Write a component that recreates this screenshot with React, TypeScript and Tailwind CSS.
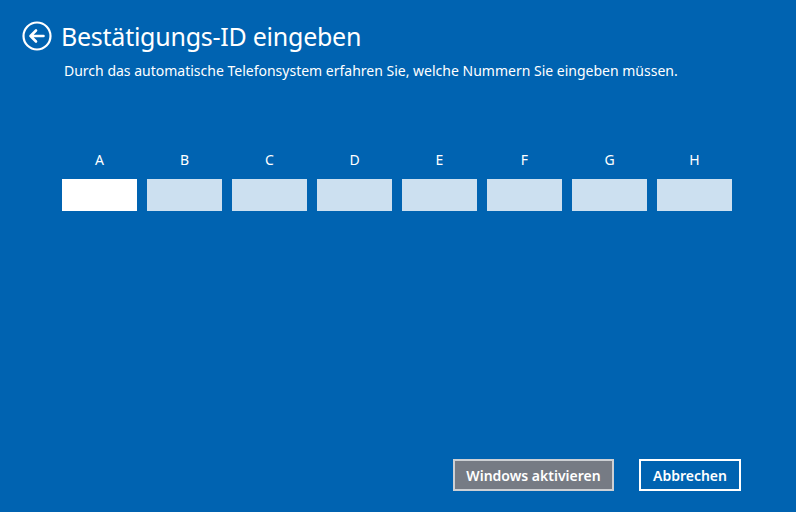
import React from "react";

const letters = ["A", "B", "C", "D", "E", "F", "G", "H"];

export default function App() {
  return (
    <div
      className="w-full h-[512px] bg-[#0063b1] text-white flex flex-col overflow-hidden"
      style={{ fontFamily: '"Noto Sans", "Open Sans", sans-serif' }}
    >
      <div className="flex items-center pl-[22px] pt-[21px]">
        <svg width="30" height="30" viewBox="0 0 30 30" className="shrink-0">
          <circle cx="15" cy="15" r="13.5" fill="none" stroke="white" strokeWidth="2.2" />
          <path d="M8.5 15 H21.5 M14 9.5 L8.5 15 L14 20.5" fill="none" stroke="white" strokeWidth="2.6" strokeLinecap="round" strokeLinejoin="round" />
        </svg>
        <h1 className="ml-[9px] text-[25px] leading-[30px] font-normal tracking-[-0.25px]">Bestätigungs-ID eingeben</h1>
      </div>
      <p className="pl-[64px] mt-[11px] text-[14px] leading-[18px]">
        Durch das automatische Telefonsystem erfahren Sie, welche Nummern Sie eingeben müssen.
      </p>
      <div className="flex gap-[10px] pl-[62px] mt-[71px]">
        {letters.map((l, i) => (
          <div key={l} className="flex flex-col items-center w-[75px]">
            <span className="text-[14px] leading-[18px]">{l}</span>
            <div className={`mt-[10px] w-[75px] h-[32px] ${i === 0 ? "bg-white" : "bg-[#cce0f0]"}`} />
          </div>
        ))}
      </div>
      <div className="flex-1" />
      <div className="flex justify-end gap-[25px] pr-[55px] pb-[21px]">
        <button className="w-[161px] h-[32px] border-2 border-[#cdd0d4] bg-[#767b84] text-[14px] font-semibold text-white">
          Windows aktivieren
        </button>
        <button className="w-[102px] h-[32px] border-2 border-white bg-[#0063b1] text-[14px] font-semibold text-white">
          Abbrechen
        </button>
      </div>
    </div>
  );
}
